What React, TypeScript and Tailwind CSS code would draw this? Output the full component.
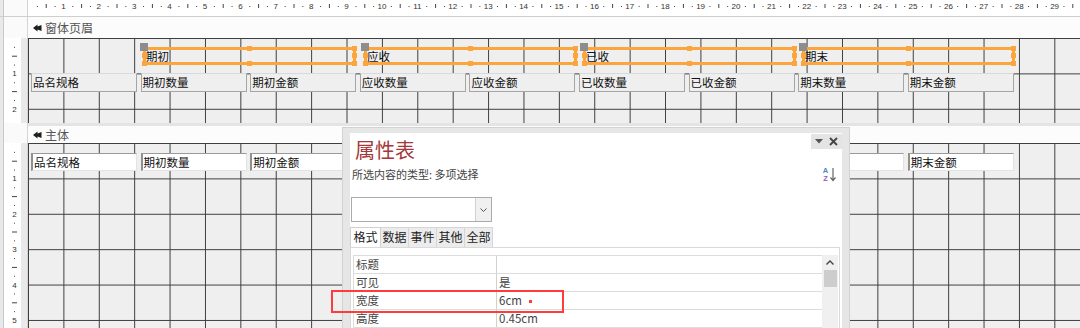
import React from 'react'

const CM = 35.4

const headerLabels = ['期初', '应收', '已收', '期末']
const headerLefts = [115, 336, 555, 774]

const fields = ['品名规格', '期初数量', '期初金额', '应收数量', '应收金额', '已收数量', '已收金额', '期末数量', '期末金额']
const fieldLeft = (i: number) => 3 + i * 109.6

// detail boxes 3..6 sit fully under the property sheet
const detailShown = [0, 1, 2, 7, 8]

const props = [
  { k: '标题', v: '' },
  { k: '可见', v: '是' },
  { k: '宽度', v: '6cm' },
  { k: '高度', v: '0.45cm' },
]

function TopRuler() {
  const marks = []
  for (let k = 0; k < 30; k++) {
    const b = k * CM
    marks.push(
      <g key={k}>
        <rect x={b + 8.85} y={6} width={1} height={1} fill="#444" />
        <rect x={b + 17.7} y={4} width={1} height={4} fill="#444" />
        <rect x={b + 26.55} y={6} width={1} height={1} fill="#444" />
        {k < 29 && (
          <text x={b + CM} y={9} fontSize={8} textAnchor="middle" fill="#333" fontFamily="Liberation Sans, sans-serif">
            {k + 1}
          </text>
        )}
      </g>,
    )
  }
  return (
    <svg width={1052} height={16} className="block">
      {marks}
    </svg>
  )
}

function LeftRuler({ height, count }: { height: number; count: number }) {
  const marks = []
  for (let k = 0; k < count; k++) {
    const b = k * CM
    marks.push(
      <g key={k}>
        <rect x={11} y={b + 8.85} width={1} height={1} fill="#444" />
        <rect x={9} y={b + 17.7} width={5} height={1} fill="#444" />
        <rect x={11} y={b + 26.55} width={1} height={1} fill="#444" />
        <text x={11.5} y={b + CM + 3} fontSize={8} textAnchor="middle" fill="#333" fontFamily="Liberation Sans, sans-serif">
          {k + 1}
        </text>
      </g>,
    )
  }
  return (
    <div className="flex w-[28px] shrink-0 bg-[#e9e9e9]">
      <div className="w-[4px] border-r border-[#c9c9c9]" />
      <div className="w-[17px] bg-white overflow-hidden">
        <svg width={17} height={height} className="block -ml-[1px]">
          {marks}
        </svg>
      </div>
      <div className="flex-1 border-r border-[#d4d4d4]" />
    </div>
  )
}

function SectionIcon() {
  return (
    <svg width={9} height={8} viewBox="0 0 9 8" className="block">
      <path d="M0 4 L4.5 0.5 L4.5 2.5 L8.5 1 L8.5 7 L4.5 5.5 L4.5 7.5 Z" fill="#1e1e1e" />
    </svg>
  )
}

function Band({ label, h, top }: { label: string; h: string; top: string }) {
  return (
    <div className={`flex ${h}`}>
      <div className="flex w-[28px] shrink-0 bg-[#e9e9e9]">
        <div className="w-[4px] border-r border-[#c9c9c9]" />
        <div className="flex-1 bg-[#fafafa] border-r border-[#d4d4d4]" />
      </div>
      <div className={`flex-1 flex items-center gap-[3px] pl-[5px] bg-[#fcfcfc] ${top}`}>
        <SectionIcon />
        <span className="text-[12px] text-[#555]">{label}</span>
      </div>
    </div>
  )
}

const gridBg =
  'bg-[#efefef] bg-[linear-gradient(to_right,#3d3d3d_1px,transparent_1px),linear-gradient(to_bottom,#3d3d3d_1px,transparent_1px)] bg-size-[35.4px_35.4px]'

function Handle({ cls }: { cls: string }) {
  return <div className={`absolute w-[5px] h-[5px] bg-[#fba53c] ${cls}`} />
}

function SelLabel({ text, left }: { text: string; left: number }) {
  return (
    <div className="absolute top-[9px] h-[18px] w-[213px] border-[3px] border-[#fba53c]" style={{ left }}>
      <span className="absolute left-0 top-0 text-[11.5px] leading-[12px] text-[#111]">{text}</span>
      <div className="absolute -left-[6px] -top-[7px] w-[8px] h-[8px] bg-[#8d8d8d]" />
      <Handle cls="left-[101px] -top-[4px]" />
      <Handle cls="left-[101px] -bottom-[4px]" />
      <Handle cls="-left-[4px] top-[3px]" />
      <Handle cls="-left-[4px] -bottom-[4px]" />
      <Handle cls="-right-[4px] -top-[4px]" />
      <Handle cls="-right-[4px] top-[3px]" />
      <Handle cls="-right-[4px] -bottom-[4px]" />
    </div>
  )
}

function AZIcon() {
  return (
    <svg width={15} height={17} viewBox="0 0 15 17" className="block">
      <text x={3.5} y={7} fontSize={7.5} textAnchor="middle" fill="#4a86c8" fontFamily="Liberation Sans, sans-serif" fontWeight={700}>
        A
      </text>
      <text x={3.5} y={15} fontSize={7.5} textAnchor="middle" fill="#9a5cb4" fontFamily="Liberation Sans, sans-serif" fontWeight={700}>
        Z
      </text>
      <path d="M11 2 V14 M8.5 11.5 L11 14.5 L13.5 11.5" stroke="#666" strokeWidth={1.2} fill="none" />
    </svg>
  )
}

function PropertySheet() {
  return (
    <div className="absolute left-[342px] top-[127px] w-[508px] h-[215px] bg-[#e6e6e6] border border-[#d2d2d2] px-[7px] pt-[5px]">
      <div className="h-full bg-white flex flex-col">
        <div className="flex justify-between h-[32px]">
          <div className="pl-[5px] pt-[4px] text-[20px] leading-[26px] text-[#a4373a]">属性表</div>
          <div className="flex items-center gap-[6px] h-[15px] mt-[1px] px-[4px] bg-[#e4e4e4]">
            <svg width={8} height={5} viewBox="0 0 8 5" className="block">
              <path d="M0 0 H8 L4 4.5 Z" fill="#555" />
            </svg>
            <svg width={9} height={9} viewBox="0 0 9 9" className="block">
              <path d="M1 1 L8 8 M8 1 L1 8" stroke="#444" strokeWidth={1.8} />
            </svg>
          </div>
        </div>
        <div className="flex justify-between items-center h-[18px] pl-[2px] pr-[5px]">
          <span className="text-[11px] text-[#444]">所选内容的类型: 多项选择</span>
          <AZIcon />
        </div>
        <div className="ml-[1px] mt-[14px] w-[141px] h-[25px] border border-[#ababab] flex justify-end">
          <div className="w-[16px] bg-[#f0f0f0] border-l border-[#d0d0d0] flex items-center justify-center">
            <svg width={7} height={4} viewBox="0 0 7 4" className="block">
              <path d="M0.5 0.5 L3.5 3.5 L6.5 0.5" stroke="#555" fill="none" />
            </svg>
          </div>
        </div>
        <div className="flex mt-[5px] h-[20px] text-[12px] leading-[18px] text-[#222]">
          <div className="w-[31px] text-center bg-white border-x border-t border-[#d0d0d0]">格式</div>
          {['数据', '事件', '其他', '全部'].map((t) => (
            <div key={t} className="w-[28px] text-center bg-[#ececec] border-r border-t border-[#d6d6d6]">
              {t}
            </div>
          ))}
        </div>
        <div className="flex-1 w-[490px] border border-[#dadada] pt-[7px] pl-[2px]">
          <div className="flex">
            <div className="w-[469px] border-t border-l border-[#dcdcdc]">
              {props.map((p) => (
                <div key={p.k} className="flex h-[18px] border-b border-[#dcdcdc] text-[11.5px] leading-[17px] text-[#444]">
                  <div className="w-[143px] pl-[2px] border-r border-[#d0d0d0]">{p.k}</div>
                  <div className="flex-1 pl-[2px]">{p.v}</div>
                </div>
              ))}
            </div>
            <div className="w-[16px] h-[80px] bg-[#f0f0f0] flex flex-col items-center pt-[5px]">
              <svg width={8} height={5} viewBox="0 0 8 5" className="block">
                <path d="M0.5 4.5 L4 1 L7.5 4.5" stroke="#444" strokeWidth={1.4} fill="none" />
              </svg>
              <div className="mt-[5px] w-[13px] h-[17px] bg-[#cdcdcd]" />
            </div>
          </div>
        </div>
      </div>
    </div>
  )
}

export default function App() {
  return (
    <div className="relative w-[1080px] h-[328px] overflow-hidden bg-[#efefef] font-['Noto_Sans_CJK_SC',sans-serif]">
      {/* top ruler */}
      <div className="flex h-[17px]">
        <div className="flex w-[28px] shrink-0 bg-[#e9e9e9] border-b border-[#cfcfcf]">
          <div className="w-[4px] border-r border-[#c9c9c9]" />
          <div className="flex-1 bg-[#fafafa] border-r border-[#d4d4d4]" />
        </div>
        <div className="flex-1 bg-white border-b border-[#cfcfcf]">
          <TopRuler />
        </div>
      </div>

      {/* form header */}
      <Band label="窗体页眉" h="h-[21px]" top="" />
      <div className="flex h-[85px]">
        <LeftRuler height={85} count={2} />
        <div className={`relative flex-1 ${gridBg}`}>
          {headerLabels.map((t, i) => (
            <SelLabel key={t} text={t} left={headerLefts[i]} />
          ))}
          {fields.map((f, i) => (
            <div
              key={f}
              className="absolute top-[35px] w-[106px] h-[19px] bg-[#efefef] border-x border-b border-t border-x-[#a5a5a5] border-b-[#a5a5a5] border-t-[#d9d9d9] text-[11.5px] leading-[17px] text-[#111] pl-[1px]"
              style={{ left: fieldLeft(i) }}
            >
              {f}
            </div>
          ))}
        </div>
      </div>

      {/* detail */}
      <Band label="主体" h="h-[20px]" top="border-t-[3px] border-[#e4e4e4]" />
      <div className="flex h-[185px]">
        <LeftRuler height={185} count={5} />
        <div className={`relative flex-1 ${gridBg}`}>
          {detailShown.map((i) => (
            <div
              key={fields[i]}
              className="absolute top-[10px] w-[106px] h-[18px] bg-white border-l-2 border-t border-r border-b border-l-[#8f8f8f] border-t-[#9a9a9a] border-r-[#e3e3e3] border-b-[#e3e3e3] text-[11.5px] leading-[16px] text-[#111] pl-[1px]"
              style={{ left: fieldLeft(i) }}
            >
              {i === 7 ? '' : fields[i]}
            </div>
          ))}
        </div>
      </div>

      <PropertySheet />

      {/* annotation */}
      <div className="absolute left-[331px] top-[290px] w-[233px] h-[23px] border-2 border-[#ff3b3b]" />
      <div className="absolute left-[529px] top-[300px] w-[3px] h-[3px] bg-[#ff3b3b]" />
    </div>
  )
}
